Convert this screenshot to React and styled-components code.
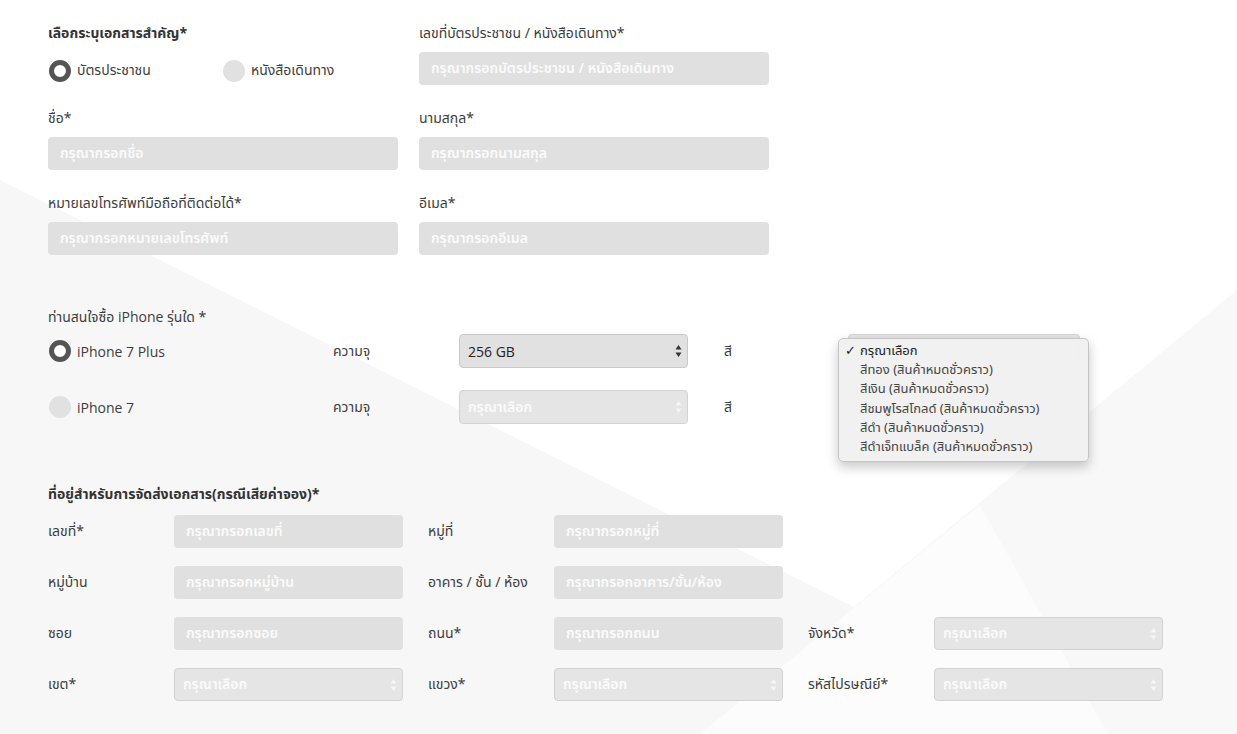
import React from "react";
import styled, { createGlobalStyle } from "styled-components";

const Global = createGlobalStyle`
  html, body { margin: 0; padding: 0; background: #fff; }
  body {
    font-family: "Noto Sans Thai", "Noto Sans", "DejaVu Sans", sans-serif;
    color: #3d3d3d;
  }
  * { box-sizing: border-box; }
`;

const Page = styled.div`
  position: relative;
  width: 1237px;
  height: 734px;
  overflow: hidden;
`;

const Decor = styled.svg`
  position: absolute;
  left: 0;
  top: 0;
  z-index: 0;
`;

const Form = styled.form`
  position: relative;
  z-index: 1;
  padding: 24px 0 0 48px;
`;

const TwoCol = styled.div`
  display: grid;
  grid-template-columns: 350px 350px;
  column-gap: 21px;
  row-gap: 24px;
`;

const Field = styled.div`
  display: flex;
  flex-direction: column;
  gap: 8px;
`;

const Label = styled.div`
  font-size: 14px;
  line-height: 20px;
  height: 20px;
  white-space: nowrap;
  font-weight: ${(p) => (p.$bold ? 700 : 400)};
  color: ${(p) => (p.$bold ? "#333" : "#3d3d3d")};
`;

const TextInput = styled.input`
  height: 33px;
  width: 100%;
  border: none;
  border-radius: 4px;
  background: #e0e0e0;
  padding: 0 12px;
  font-family: inherit;
  font-size: 14px;
  font-weight: 600;
  outline: none;
  &::placeholder { color: #fbfbfb; opacity: 1; }
`;

const RadioRow = styled.div`
  height: 33px;
  display: flex;
  align-items: center;
  padding-top: 4px;
`;

const RadioOption = styled.label`
  display: flex;
  align-items: center;
  gap: 6px;
  width: ${(p) => p.$w || "auto"};
  font-size: 14px;
  font-family: ${(p) => (p.$latin ? '"Open Sans", "DejaVu Sans", sans-serif' : "inherit")};
  color: #3d3d3d;
  padding-left: 1px;
`;

const RadioDot = styled.span`
  width: 22px;
  height: 22px;
  border-radius: 50%;
  flex: none;
  background: ${(p) => (p.$checked ? "#fff" : "#e1e1e1")};
  border: ${(p) => (p.$checked ? "5px solid #555" : "none")};
`;

const Section = styled.section`
  margin-top: ${(p) => p.$mt}px;
`;

const Latin = styled.span`
  font-family: "Open Sans", "DejaVu Sans", sans-serif;
`;

const ModelGrid = styled.div`
  display: grid;
  grid-template-columns: 285px 126px 229px 36px 124px 232px;
  grid-auto-rows: 34px;
  row-gap: 22px;
  align-items: center;
  margin-top: 7px;
`;

const Cell = styled.div`
  font-size: 14px;
  color: #3d3d3d;
  position: relative;
  height: 100%;
  display: flex;
  align-items: center;
  white-space: nowrap;
`;

const SelectWrap = styled.div`
  position: relative;
  width: 100%;
  height: ${(p) => p.$h || 34}px;
`;

const NativeSelect = styled.select`
  appearance: none;
  -webkit-appearance: none;
  width: 100%;
  height: 100%;
  border: 1px solid ${(p) => (p.$active ? "#c9c9c9" : "#d2d2d2")};
  border-radius: 4px;
  background: ${(p) => (p.$active ? "#e1e1e1" : "#e5e5e5")};
  padding: 0 24px 0 8px;
  font-family: ${(p) => (p.$active ? '"Open Sans", "DejaVu Sans", sans-serif' : "inherit")};
  font-size: 14px;
  font-weight: ${(p) => (p.$active ? 400 : 600)};
  color: ${(p) => (p.$active ? "#222" : "#fbfbfb")};
  outline: none;
`;

const Arrows = styled.svg`
  position: absolute;
  right: 6px;
  top: 50%;
  transform: translateY(-50%);
  pointer-events: none;
`;

const Menu = styled.div`
  position: absolute;
  left: -10px;
  top: 4px;
  width: 251px;
  padding: 3px 0 4px;
  background: rgba(241, 241, 241, 0.98);
  border: 1px solid #c4c4c4;
  border-radius: 5px;
  box-shadow: 0 5px 12px rgba(0, 0, 0, 0.22);
  z-index: 5;
`;

const MenuItem = styled.div`
  position: relative;
  font-size: 13px;
  line-height: 19.2px;
  padding-left: 21px;
  color: ${(p) => (p.$selected ? "#222" : "#444")};
  white-space: nowrap;
  &::before {
    content: ${(p) => (p.$selected ? '"✓"' : '""')};
    position: absolute;
    left: 6px;
    top: 0;
  }
`;

const AddrGrid = styled.div`
  display: grid;
  grid-template-columns: 126px 229px 25px 126px 229px 25px 126px 229px;
  grid-auto-rows: 33px;
  row-gap: 18px;
  align-items: center;
  margin-top: 10px;
`;

const Spacer = styled.div``;

function Select({ value, active, h, options }) {
  const c = active ? "#333" : "#f6f6f6";
  return (
    <SelectWrap $h={h}>
      <NativeSelect $active={active} defaultValue={value}>
        {(options || [value]).map((o) => (
          <option key={o}>{o}</option>
        ))}
      </NativeSelect>
      <Arrows width="7" height="13" viewBox="0 0 7 13">
        <path d="M3.5 0.5 L6.5 5 L0.5 5 Z" fill={c} />
        <path d="M3.5 12.5 L6.5 8 L0.5 8 Z" fill={c} />
      </Arrows>
    </SelectWrap>
  );
}

const colors = [
  "กรุณาเลือก",
  "สีทอง (สินค้าหมดชั่วคราว)",
  "สีเงิน (สินค้าหมดชั่วคราว)",
  "สีชมพูโรสโกลด์ (สินค้าหมดชั่วคราว)",
  "สีดำ (สินค้าหมดชั่วคราว)",
  "สีดำเจ็ทแบล็ค (สินค้าหมดชั่วคราว)",
];

const addressRows = [
  [
    ["เลขที่*", "กรุณากรอกเลขที่"],
    ["หมู่ที่", "กรุณากรอกหมู่ที่"],
    null,
  ],
  [
    ["หมู่บ้าน", "กรุณากรอกหมู่บ้าน"],
    ["อาคาร / ชั้น / ห้อง", "กรุณากรอกอาคาร/ชั้น/ห้อง"],
    null,
  ],
  [
    ["ซอย", "กรุณากรอกซอย"],
    ["ถนน*", "กรุณากรอกถนน"],
    ["จังหวัด*", "กรุณาเลือก", true],
  ],
  [
    ["เขต*", "กรุณาเลือก", true],
    ["แขวง*", "กรุณาเลือก", true],
    ["รหัสไปรษณีย์*", "กรุณาเลือก", true],
  ],
];

export default function App() {
  return (
    <Page>
      <Global />
      <Decor width="1237" height="734" viewBox="0 0 1237 734">
        <polygon points="0,180 1108,734 0,734" fill="#f7f7f7" />
        <polygon points="1237,290 1237,734 700,734" fill="#f8f8f8" />
        <polygon points="700,734 980,505 1108,734" fill="#fcfcfc" />
      </Decor>
      <Form>
        <TwoCol>
          <Field>
            <Label $bold>เลือกระบุเอกสารสำคัญ*</Label>
            <RadioRow>
              <RadioOption $w="174px">
                <RadioDot $checked />
                บัตรประชาชน
              </RadioOption>
              <RadioOption>
                <RadioDot />
                หนังสือเดินทาง
              </RadioOption>
            </RadioRow>
          </Field>
          <Field>
            <Label>เลขที่บัตรประชาชน / หนังสือเดินทาง*</Label>
            <TextInput placeholder="กรุณากรอกบัตรประชาชน / หนังสือเดินทาง" />
          </Field>
          <Field>
            <Label>ชื่อ*</Label>
            <TextInput placeholder="กรุณากรอกชื่อ" />
          </Field>
          <Field>
            <Label>นามสกุล*</Label>
            <TextInput placeholder="กรุณากรอกนามสกุล" />
          </Field>
          <Field>
            <Label>หมายเลขโทรศัพท์มือถือที่ติดต่อได้*</Label>
            <TextInput placeholder="กรุณากรอกหมายเลขโทรศัพท์" />
          </Field>
          <Field>
            <Label>อีเมล*</Label>
            <TextInput placeholder="กรุณากรอกอีเมล" />
          </Field>
        </TwoCol>

        <Section $mt={52}>
          <Label>
            ท่านสนใจซื้อ <Latin>iPhone</Latin> รุ่นใด *
          </Label>
          <ModelGrid>
            <Cell>
              <RadioOption $latin>
                <RadioDot $checked />
                iPhone 7 Plus
              </RadioOption>
            </Cell>
            <Cell>ความจุ</Cell>
            <Select value="256 GB" active options={["256 GB", "128 GB", "32 GB"]} />
            <Spacer />
            <Cell>สี</Cell>
            <Cell>
              <Select value="กรุณาเลือก" options={colors} />
              <Menu>
                {colors.map((c, i) => (
                  <MenuItem key={c} $selected={i === 0}>
                    {c}
                  </MenuItem>
                ))}
              </Menu>
            </Cell>

            <Cell>
              <RadioOption $latin>
                <RadioDot />
                iPhone 7
              </RadioOption>
            </Cell>
            <Cell>ความจุ</Cell>
            <Select value="กรุณาเลือก" />
            <Spacer />
            <Cell>สี</Cell>
            <Spacer />
          </ModelGrid>
        </Section>

        <Section $mt={61}>
          <Label $bold>ที่อยู่สำหรับการจัดส่งเอกสาร(กรณีเสียค่าจอง)*</Label>
          <AddrGrid>
            {addressRows.map((row, ri) =>
              row.map((f, ci) => {
                const gap = ci < 2 ? <Spacer key={`g${ri}${ci}`} /> : null;
                if (!f) {
                  return [<Spacer key={`a${ri}${ci}`} />, <Spacer key={`b${ri}${ci}`} />];
                }
                return [
                  <Cell key={`l${ri}${ci}`}>{f[0]}</Cell>,
                  f[2] ? (
                    <Select key={`i${ri}${ci}`} value={f[1]} h={33} />
                  ) : (
                    <TextInput key={`i${ri}${ci}`} placeholder={f[1]} />
                  ),
                  gap,
                ];
              })
            )}
          </AddrGrid>
        </Section>
      </Form>
    </Page>
  );
}
